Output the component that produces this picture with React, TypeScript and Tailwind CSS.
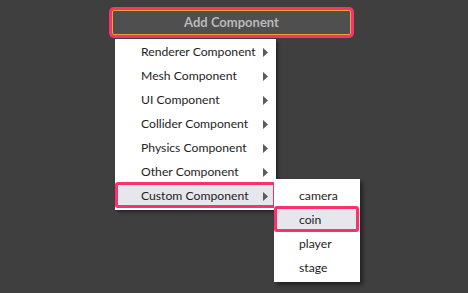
import { useState } from 'react';

const items = [
  'Renderer Component',
  'Mesh Component',
  'UI Component',
  'Collider Component',
  'Physics Component',
  'Other Component',
  'Custom Component',
];

const customItems = ['camera', 'coin', 'player', 'stage'];

const Arrow = () => (
  <svg width="5" height="9" viewBox="0 0 5 9" className="shrink-0">
    <path d="M0 0 L5 4.5 L0 9 Z" fill="#5a5a5a" />
  </svg>
);

export default function App() {
  const [open] = useState('Custom Component');
  const [selected] = useState('coin');

  return (
    <div
      className="min-h-screen w-full bg-[#3f3f3f] pt-[10px] pl-[112px]"
      style={{ fontFamily: 'Lato, "Open Sans", sans-serif' }}
    >
      <button className="flex h-[25px] w-[239px] items-center justify-center rounded-[2px] border border-[#f0a030] bg-[#4f4f4f] text-[13px] font-bold text-[#b9b9b9] ring-3 ring-[#f7336c]">
        Add Component
      </button>

      <div className="relative mt-[4px] ml-[3px] w-[161px] bg-white pt-[1px] pb-[2px] shadow-[2px_2px_3px_rgba(0,0,0,0.45)]">
        {items.map((label) => (
          <div
            key={label}
            className={`relative flex h-[24px] items-center justify-between whitespace-nowrap pl-[26px] pr-[8px] text-[12.2px] text-[#1e1e1e] ${
              label === open ? 'bg-[#e6e7ed]' : ''
            }`}
          >
            <span>{label}</span>
            <Arrow />
            {label === open && (
              <>
                <div className="pointer-events-none absolute left-0 right-0 top-[-2px] bottom-0 rounded-[3px] border-[3px] border-[#f7336c]" />
                <div className="absolute left-[159px] top-[-5px] w-[86px] bg-white pt-[5px] pb-[2px] shadow-[3px_3px_4px_rgba(0,0,0,0.45)]">
                  {customItems.map((name) => (
                    <div
                      key={name}
                      className={`relative flex h-[24px] items-center pl-[25px] text-[12.2px] text-[#1e1e1e] ${
                        name === selected ? 'bg-[#e6e7ed]' : ''
                      }`}
                    >
                      {name}
                      {name === selected && (
                        <div className="pointer-events-none absolute left-0 right-[1px] top-[-2px] bottom-0 rounded-[3px] border-[3px] border-[#f7336c]" />
                      )}
                    </div>
                  ))}
                </div>
              </>
            )}
          </div>
        ))}
      </div>
    </div>
  );
}
